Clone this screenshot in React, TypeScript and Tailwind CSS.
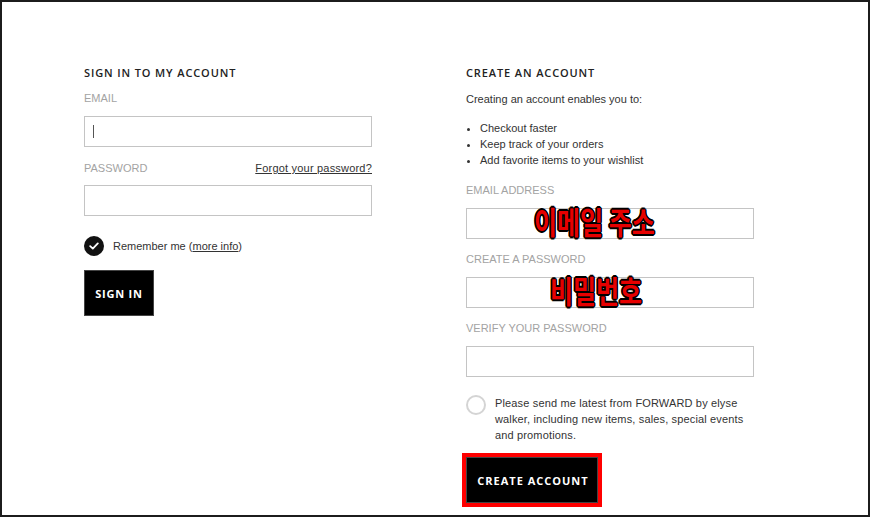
import React from "react";

const heading = "font-['Open_Sans',sans-serif] text-[11px] leading-[16px] font-semibold tracking-[0.08em] text-[#222]";
const label = "text-[11px] leading-[16px] uppercase text-[#a3a3a3]";
const input = "h-[31px] w-full border border-[#c4c4c4] bg-white";
const koreanNote =
  "absolute top-[-3px] origin-top scale-y-[1.22] font-['Noto_Sans_CJK_KR',sans-serif] text-[25px] leading-none font-bold text-[#e60000] [text-shadow:1.5px_0_0_#000,-1.5px_0_0_#000,0_1.5px_0_#000,0_-1.5px_0_#000,1px_1px_0_#000,-1px_-1px_0_#000,1px_-1px_0_#000,-1px_1px_0_#000] whitespace-nowrap";

export default function App() {
  return (
    <div className="w-[870px] h-[517px] border-2 border-[#1c1c1c] bg-white font-['Liberation_Sans',Arial,sans-serif] text-[#333] overflow-hidden">
      <div className="flex gap-[94px] pl-[82px] pt-[63px]">
        {/* sign in */}
        <div className="w-[288px] flex flex-col">
          <h2 className={heading}>SIGN IN TO MY ACCOUNT</h2>
          <label className={`${label} mt-[9px]`}>Email</label>
          <div className={`${input} mt-[10px] flex items-center pl-[8px]`}>
            <span className="w-px h-[13px] bg-[#555]" />
          </div>
          <div className="mt-[13px] flex justify-between">
            <label className={label}>Password</label>
            <a className="text-[11px] leading-[16px] tracking-[0.2px] text-[#333] underline">Forgot your password?</a>
          </div>
          <div className={`${input} mt-[9px]`} />
          <div className="mt-[20px] flex items-center gap-[9px]">
            <span className="w-[20px] h-[20px] rounded-full bg-[#111] flex items-center justify-center">
              <svg width="10" height="8" viewBox="0 0 10 8" fill="none">
                <path d="M1.2 4.2 L3.8 6.6 L8.8 1.4" stroke="#fff" strokeWidth="1.8" strokeLinecap="round" strokeLinejoin="round" />
              </svg>
            </span>
            <span className="text-[11px] leading-[16px]">
              Remember me (<a className="underline">more info</a>)
            </span>
          </div>
          <button className="mt-[14px] w-[70px] h-[46px] pt-[2px] bg-black border border-[#444] text-white font-['Open_Sans',sans-serif] text-[11px] font-bold tracking-[0.07em]">
            SIGN IN
          </button>
        </div>

        {/* create account */}
        <div className="w-[288px] flex flex-col">
          <h2 className={heading}>CREATE AN ACCOUNT</h2>
          <p className="mt-[10px] text-[11px] leading-[16px]">Creating an account enables you to:</p>
          <ul className="mt-[13px] text-[11px] leading-[16px] list-disc pl-[14px]">
            <li>Checkout faster</li>
            <li>Keep track of your orders</li>
            <li>Add favorite items to your wishlist</li>
          </ul>
          <label className={`${label} mt-[14px]`}>Email Address</label>
          <div className={`${input} mt-[10px] relative`}>
            <span className={`${koreanNote} left-[67px]`}>이메일 주소</span>
          </div>
          <label className={`${label} mt-[12px]`}>Create a Password</label>
          <div className={`${input} mt-[10px] relative`}>
            <span className={`${koreanNote} left-[83px]`}>비밀번호</span>
          </div>
          <label className={`${label} mt-[12px]`}>Verify your Password</label>
          <div className={`${input} mt-[10px]`} />
          <div className="mt-[18px] flex items-start gap-[9px]">
            <span className="shrink-0 w-[20px] h-[20px] rounded-full border-2 border-[#d4d4d4]" />
            <p className="text-[11px] leading-[16px] tracking-[0.15px] w-[262px]">
              Please send me latest from FORWARD by elyse walker, including new items, sales, special events and promotions.
            </p>
          </div>
          <div className="mt-[10px] ml-[-4px] w-[140px] h-[54px] border-4 border-[#ff0000]">
            <button className="w-full h-full pt-[3px] pl-[2px] bg-black border border-[#444] text-white font-['Open_Sans',sans-serif] text-[11px] font-bold tracking-[0.09em]">
              CREATE ACCOUNT
            </button>
          </div>
        </div>
      </div>
    </div>
  );
}
